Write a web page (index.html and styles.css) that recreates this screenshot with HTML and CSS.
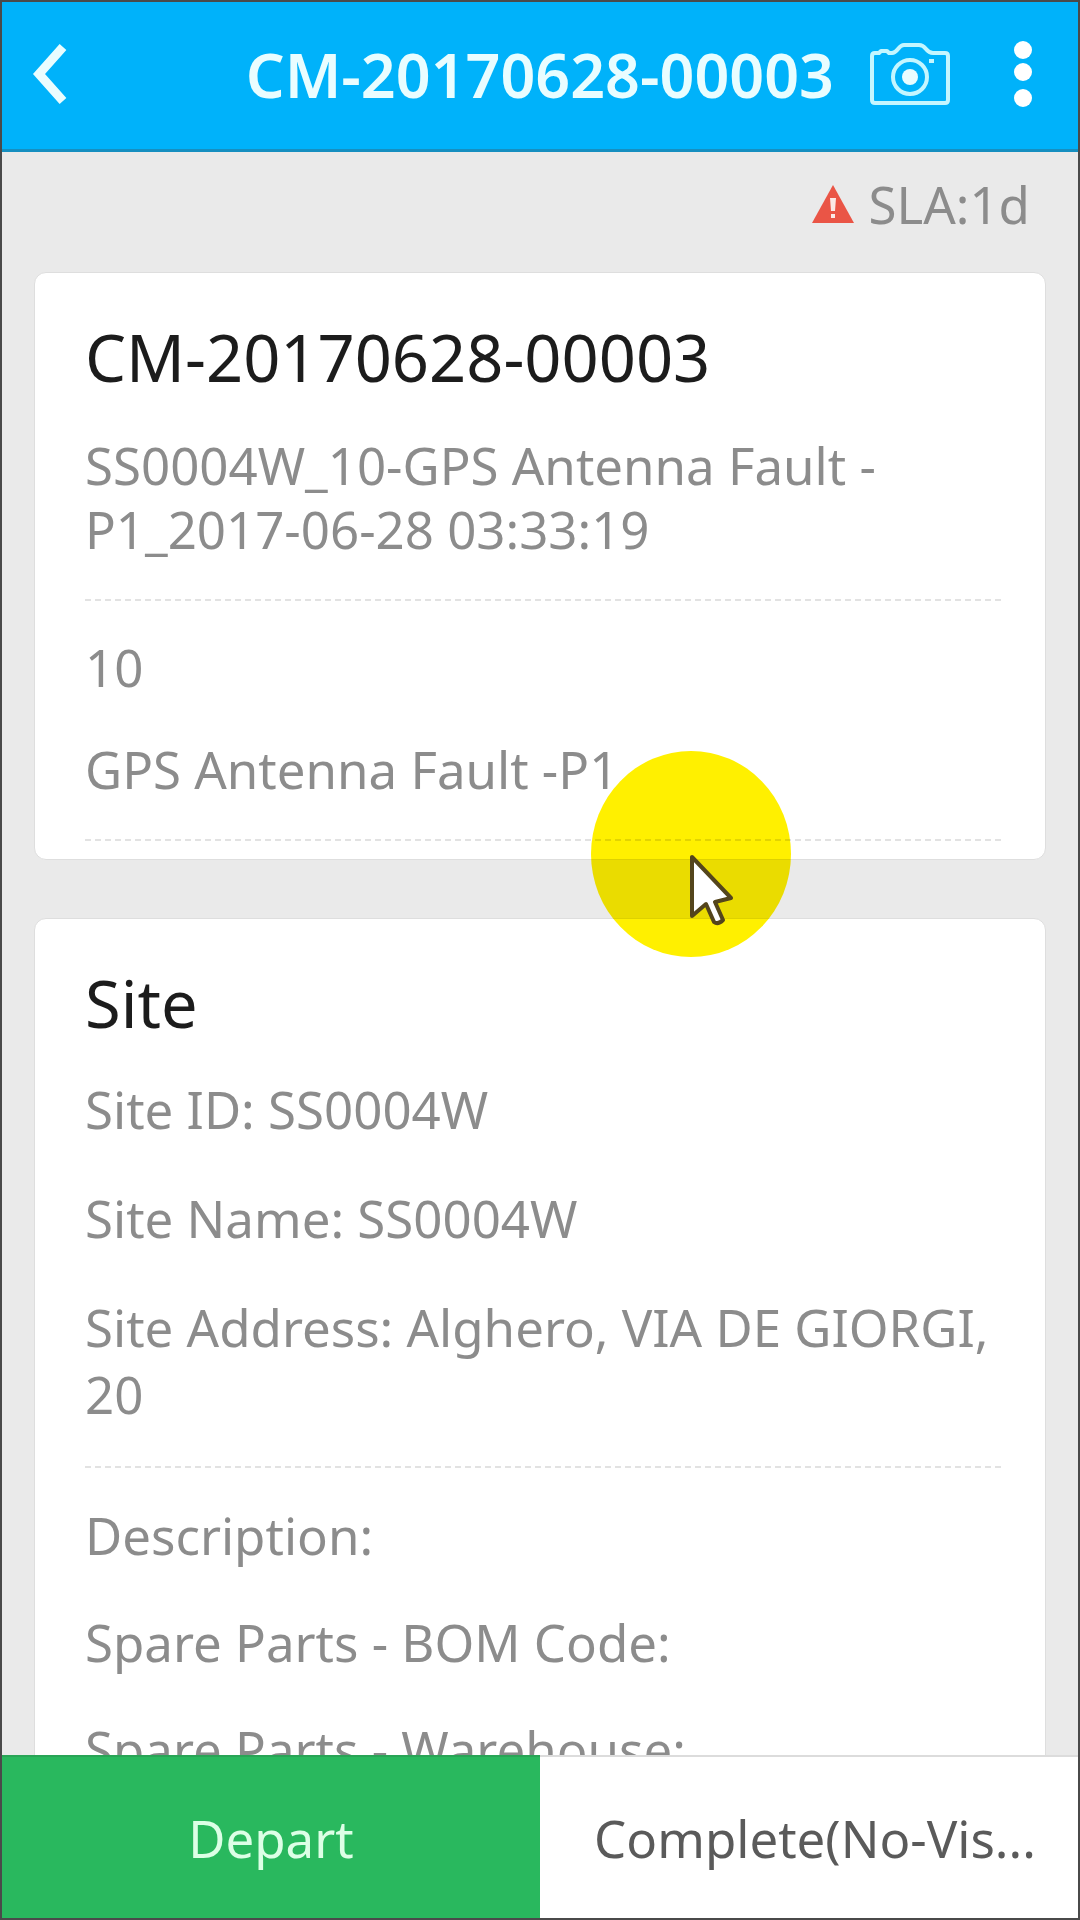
FILE: index.html
```html
<!DOCTYPE html>
<html lang="en">
<head>
<meta charset="utf-8">
<meta name="viewport" content="width=device-width, initial-scale=1">
<title>CM-20170628-00003</title>
<link rel="stylesheet" href="styles.css">
</head>
<body>
<div class="app">
  <header class="topbar">
    <button class="icon-button back" type="button" aria-label="Back">
      <svg width="36" height="62" viewBox="0 0 36 62"><path d="M31 4 7 31l24 27" fill="none" stroke="#e9fdff" stroke-width="9"/></svg>
    </button>
    <h1 class="topbar-title">CM-20170628-00003</h1>
    <button class="icon-button" type="button" aria-label="Camera">
      <svg width="80" height="62" viewBox="0 0 80 62" fill="none" stroke="#c4f6ff" stroke-width="4" stroke-linejoin="round"><path d="M2 13q0-3 3-3h4l2-2h6l2 2h3q3 0 6-4t6-4h15q4 0 7 4t7 4h12q3 0 3 3v44q0 3-3 3H5q-3 0-3-3Z"/><circle cx="40" cy="34" r="17"/><circle cx="40" cy="34" r="8" fill="#e9fdff" stroke="none"/><path d="M59 18h5"/></svg>
    </button>
    <button class="icon-button more" type="button" aria-label="More">
      <svg width="18" height="68" viewBox="0 0 18 68" fill="#fff"><circle cx="9" cy="10" r="9"/><circle cx="9" cy="32" r="9"/><circle cx="9" cy="58" r="9"/></svg>
    </button>
  </header>

  <main class="content">
    <p class="sla">
      <svg width="42" height="38" viewBox="0 0 42 38"><path d="M21 0 42 38H0Z" fill="#ea5546"/><path d="M18 13h6l-1 13h-4ZM19 29h4v4h-4Z" fill="#fbe9e6"/></svg>
      <span>SLA:1d</span>
    </p>

    <section class="card">
      <h2 class="card-title">CM-20170628-00003</h2>
      <p class="summary">SS0004W_10-GPS Antenna Fault -<br>P1_2017-06-28 03:33:19</p>
      <hr class="divider">
      <p class="row">10</p>
      <p class="row">GPS Antenna Fault -P1</p>
      <hr class="divider last">
      <div class="spot" aria-hidden="true"></div>
      <svg class="cursor" aria-hidden="true" width="46" height="74" viewBox="0 0 46 74"><path d="M3 4V63l14-12 8 18q4 3 9-2l-8-18 16-4Z" fill="#fff" stroke="#54451c" stroke-width="4" stroke-linejoin="round"/></svg>
    </section>

    <section class="card">
      <h2 class="card-title">Site</h2>
      <div class="site">
        <p>Site ID: SS0004W</p>
        <p>Site Name: SS0004W</p>
        <p>Site Address: Alghero, VIA DE GIORGI, 20</p>
      </div>
      <hr class="divider">
      <div class="parts">
        <p>Description:</p>
        <p>Spare Parts - BOM Code:</p>
        <p>Spare Parts - Warehouse:</p>
      </div>
    </section>
  </main>

  <footer class="actions">
    <button class="action primary" type="button">Depart</button>
    <button class="action" type="button">Complete(No-Vis...</button>
  </footer>
</div>
</body>
</html>
```
FILE: styles.css
```css
* { box-sizing: border-box; }

body {
  margin: 0;
  font-family: "Noto Sans", "Open Sans", sans-serif;
  font-size: 51px;
  color: #8c8c8c;
}

h1, h2, p { margin: 0; font-weight: 400; }
svg { display: block; }
button { font: inherit; border: 0; }

.app {
  display: flex;
  flex-direction: column;
  height: 100vh;
  border: 2px solid #4a4a4a;
  background: #eaeaea;
}

.topbar {
  display: flex;
  align-items: center;
  flex: none;
  height: 150px;
  padding: 0 46px 3px 30px;
  background: #00b2fa;
  border-bottom: 3px solid #168fc0;
}

.icon-button { padding: 0; background: none; }
.topbar-title {
  flex: 1;
  padding-right: 36px;
  text-align: right;
  font-size: 61px;
  font-weight: 600;
  color: #e9fdff;
}
.more { margin-left: 64px; }

.content {
  flex: 1;
  min-height: 0;
  overflow: hidden;
  padding: 0 32px;
}

.sla {
  display: flex;
  align-items: center;
  justify-content: flex-end;
  gap: 14px;
  height: 104px;
  padding-right: 16px;
  margin-bottom: 16px;
}

.card {
  position: relative;
  padding: 44px 44px 18px 50px;
  margin-bottom: 58px;
  background: #fff;
  border: 1px solid #dedede;
  border-radius: 12px;
}

.card-title {
  font-size: 65px;
  line-height: 80px;
  color: #1c1c1c;
}

.summary { padding-top: 36px; line-height: 64px; }
.divider {
  margin: 38px 0 34px;
  border: 0;
  border-top: 2px dashed #e2e2e2;
}
.divider.last { margin-bottom: 0; }
.row { line-height: 64px; }
.row + .row { margin-top: 38px; }

.site,
.parts {
  display: flex;
  flex-direction: column;
  line-height: 67px;
}
.site { gap: 42px; padding-top: 33px; }
.parts { gap: 40px; }

/* click highlight with the mouse arrow over it */
.spot,
.cursor {
  position: absolute;
  z-index: 1;
}
.spot {
  left: 556px;
  bottom: -98px;
  width: 200px;
  height: 206px;
  border-radius: 50%;
  background: #fff000;
  mix-blend-mode: multiply;
}
.cursor { left: 654px; bottom: -68px; }

.actions {
  display: grid;
  grid-template-columns: 1fr 1fr;
  flex: none;
  height: 163px;
}
.action {
  padding: 0 0 0 12px;
  white-space: nowrap;
  background: #fff;
  border-top: 2px solid #dcdcdc;
  color: #5a5a5a;
}
.action.primary {
  padding: 0;
  background: #29b85e;
  border-top-color: #29a456;
  color: #dcffe6;
}
```
